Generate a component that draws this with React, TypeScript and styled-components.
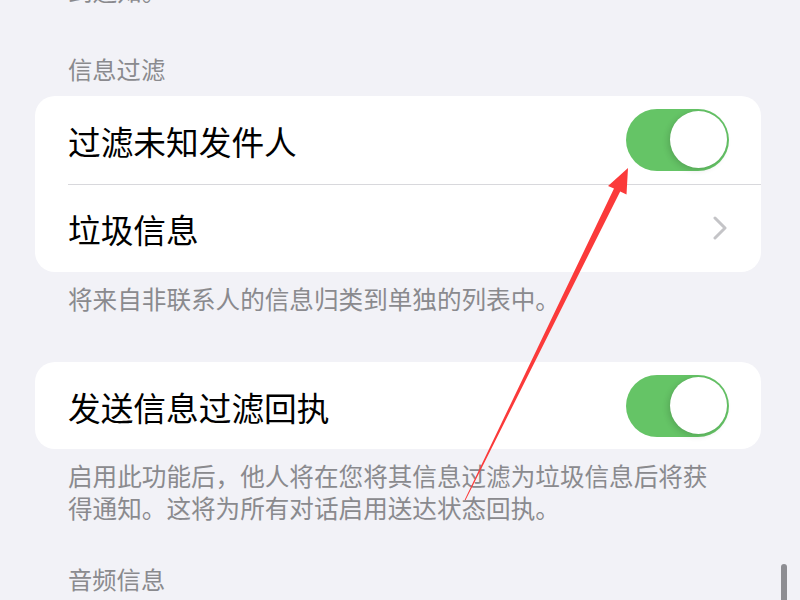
import React from "react";
import styled, { createGlobalStyle } from "styled-components";

const Global = createGlobalStyle`
  html, body { margin: 0; padding: 0; background: #f2f2f7; }
  body { font-family: "Noto Sans CJK SC", "Noto Sans", sans-serif; overflow: hidden; }
`;

const Screen = styled.div`
  position: relative;
  width: 800px;
  height: 600px;
  overflow: hidden;
  background: #f2f2f7;
`;

const Footer = styled.div<{ $mt: number }>`
  margin-top: ${(p) => p.$mt}px;
  padding: 0 72px 0 68px;
  font-size: 24.6px;
  line-height: 31.5px;
  color: #8a8a8e;
`;

const Header = styled.div<{ $mt: number }>`
  margin-top: ${(p) => p.$mt}px;
  padding: 0 68px;
  font-size: 24.3px;
  line-height: 32px;
  color: #8a8a8e;
`;

const Card = styled.div<{ $mt: number }>`
  margin: ${(p) => p.$mt}px 39px 0 35px;
  background: #ffffff;
  border-radius: 20px;
  overflow: hidden;
`;

const Row = styled.div<{ $pr: number; $h: number }>`
  height: ${(p) => p.$h}px;
  display: flex;
  align-items: center;
  justify-content: space-between;
  padding: 0 ${(p) => p.$pr}px 0 33px;
`;

const Label = styled.span`
  font-size: 32.7px;
  line-height: 40px;
  padding-top: 2px;
  color: #000;
`;

const Separator = styled.div`
  height: 1px;
  margin-left: 33px;
  background: #d8d8dc;
`;

const Track = styled.div`
  width: 103px;
  height: 62px;
  border-radius: 31px;
  background: #65c466;
  display: flex;
  align-items: center;
  justify-content: flex-end;
  padding: 0 2px;
  box-sizing: border-box;
`;

const Knob = styled.div`
  width: 57px;
  height: 57px;
  border-radius: 50%;
  background: #fff;
  box-shadow: -2px 2px 6px rgba(0, 0, 0, 0.14), 0 0 1px rgba(0, 0, 0, 0.1);
`;

const Scroll = styled.div`
  position: absolute;
  right: 13px;
  top: 564px;
  width: 6px;
  height: 48px;
  border-radius: 3px;
  background: #8e8e93;
`;

const Overlay = styled.svg`
  position: absolute;
  left: 0;
  top: 0;
  pointer-events: none;
`;

const Toggle = () => (
  <Track>
    <Knob />
  </Track>
);

const Chevron = () => (
  <svg width="14" height="24" viewBox="0 0 14 24">
    <polyline
      points="2,2 12,12 2,22"
      fill="none"
      stroke="#c4c4c7"
      strokeWidth="3"
      strokeLinecap="round"
      strokeLinejoin="round"
    />
  </svg>
);

export default function App() {
  return (
    <>
      <Global />
      <Screen>
        <Footer $mt={-25}>到通知。</Footer>
        <Header $mt={46}>信息过滤</Header>
        <Card $mt={11}>
          <Row $pr={32} $h={88}>
            <Label>过滤未知发件人</Label>
            <Toggle />
          </Row>
          <Separator />
          <Row $pr={34} $h={87}>
            <Label>垃圾信息</Label>
            <Chevron />
          </Row>
        </Card>
        <Footer $mt={11}>将来自非联系人的信息归类到单独的列表中。</Footer>
        <Card $mt={48}>
          <Row $pr={32} $h={87}>
            <Label>发送信息过滤回执</Label>
            <Toggle />
          </Row>
        </Card>
        <Footer $mt={11}>
          启用此功能后，他人将在您将其信息过滤为垃圾信息后将获得通知。这将为所有对话启用送达状态回执。
        </Footer>
        <Header $mt={40}>音频信息</Header>
        <Scroll />
        <Overlay width="800" height="600" viewBox="0 0 800 600">
          <polygon
            points="628,168 608,186 614,188.5 464.6,500 465.6,500 620.2,191.5 626.5,194.5"
            fill="#fb3a3a"
          />
        </Overlay>
      </Screen>
    </>
  );
}
